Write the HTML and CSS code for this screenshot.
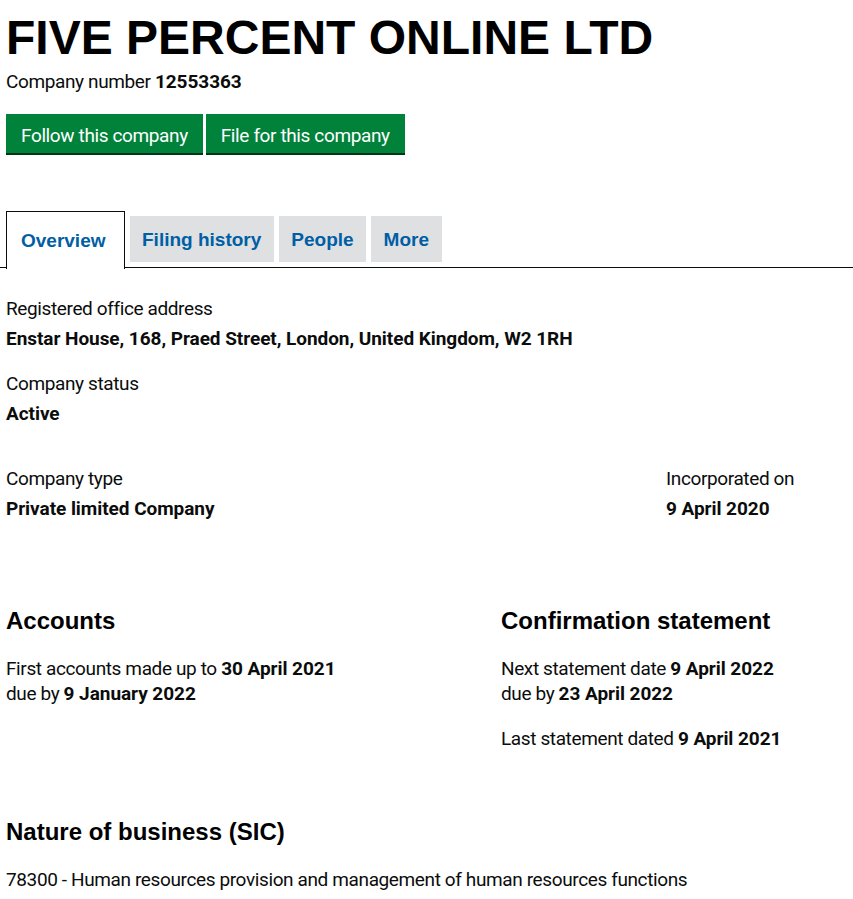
FILE: index.html
```html
<!DOCTYPE html>
<html lang="en">
<head>
    <meta charset="UTF-8">
    <meta name="viewport" content="width=device-width, initial-scale=1.0">
    <title>FIVE PERCENT ONLINE LTD - Overview</title>
    <link rel="stylesheet" href="styles.css">
</head>
<body>
    <main class="page">
        <!-- Company header -->
        <div class="company-header">
            <h1>FIVE PERCENT ONLINE LTD</h1>
            <p class="company-number">Company number <strong>12553363</strong></p>
            <div class="actions">
                <a href="#" class="button">Follow this company</a>
                <a href="#" class="button">File for this company</a>
            </div>
        </div>

        <!-- Tabs -->
        <ul class="tabs">
            <li class="tab active"><a href="#">Overview</a></li>
            <li class="tab"><a href="#">Filing history</a></li>
            <li class="tab"><a href="#">People</a></li>
            <li class="tab"><a href="#">More</a></li>
        </ul>

        <div class="panel">
            <dl class="field">
                <dt>Registered office address</dt>
                <dd>Enstar House, 168, Praed Street, London, United Kingdom, W2 1RH</dd>
            </dl>

            <dl class="field status">
                <dt>Company status</dt>
                <dd>Active</dd>
            </dl>

            <div class="row row-type">
                <dl class="field">
                    <dt>Company type</dt>
                    <dd>Private limited Company</dd>
                </dl>
                <dl class="field">
                    <dt>Incorporated on</dt>
                    <dd>9 April 2020</dd>
                </dl>
            </div>

            <div class="row row-half">
                <div class="block">
                    <h2>Accounts</h2>
                    <p class="first">First accounts made up to <strong>30 April 2021</strong>
                        <br>due by <strong>9 January 2022</strong></p>
                </div>
                <div class="block">
                    <h2>Confirmation statement</h2>
                    <p class="first">Next statement date <strong>9 April 2022</strong>
                        <br>due by <strong>23 April 2022</strong></p>
                    <p class="next">Last statement dated <strong>9 April 2021</strong></p>
                </div>
            </div>

            <div class="block sic">
                <h2>Nature of business (SIC)</h2>
                <p class="sic-line">78300 - Human resources provision and management of human resources functions</p>
            </div>
        </div>
    </main>
</body>
</html>
```

FILE: styles.css
```css
body {
    margin: 0;
    padding: 0;
    background: #ffffff;
    color: #0b0c0c;
    font-family: Roboto, "Liberation Sans", sans-serif;
    font-size: 19px;
    line-height: 25px;
    letter-spacing: -0.38px;
    overflow-x: hidden;
}
.page {
    width: 990px;
    padding: 13px 0 0 6px;
}
h1 {
    font-family: "Liberation Sans", Arial, sans-serif;
    font-weight: 700;
    font-size: 48px;
    line-height: 50px;
    letter-spacing: 0;
    margin: 0;
    color: #000000;
}
h2 {
    font-family: "Liberation Sans", Arial, sans-serif;
    font-weight: 700;
    font-size: 24px;
    line-height: 30px;
    letter-spacing: 0;
    margin: 0;
    color: #000000;
}
p {
    margin: 0;
}
strong {
    font-weight: 700;
    letter-spacing: -0.05px;
}
.company-number {
    margin-top: 6px;
}
.actions {
    display: flex;
    gap: 3px;
    margin-top: 20px;
}
.button {
    display: block;
    background: #00823b;
    color: #ffffff;
    text-decoration: none;
    padding: 9px 15px 5px;
    box-shadow: 0 2px 0 #003618;
}

/* tabs */
.tabs {
    display: flex;
    align-items: flex-start;
    list-style: none;
    margin: 58px 0 0 -6px;
    padding: 0 0 0 6px;
    border-bottom: 1px solid #0b0c0c;
    height: 56px;
}
.tab {
    margin: 5px 5px 0 0;
    background: #dee0e2;
    height: 44px;
    padding: 2px 12.5px 0;
    line-height: 44px;
}
.tab a {
    font-family: "Liberation Sans", Arial, sans-serif;
    font-weight: 700;
    font-size: 19px;
    letter-spacing: 0;
    color: #005ea5;
    text-decoration: none;
}
.tab.active {
    margin-top: 0;
    background: #ffffff;
    border: 1px solid #0b0c0c;
    border-bottom: 0;
    height: 56px;
    padding: 1px 18px 0 14px;
    line-height: 55px;
}

/* overview panel */
.panel {
    padding-top: 28px;
}
.field {
    margin: 0;
}
.field dt {
    margin-bottom: 5px;
}
.field dd {
    margin: 0;
    font-weight: 700;
    letter-spacing: -0.05px;
}
.status {
    margin-top: 20px;
}
.row {
    display: grid;
}
.row-type {
    grid-template-columns: 660px 330px;
    margin-top: 40px;
}
.row-half {
    grid-template-columns: 495px 495px;
    margin-top: 85px;
}
.block .first {
    margin-top: 20px;
}
.block .next {
    margin-top: 20px;
}
.sic {
    margin-top: 66px;
}
.sic .sic-line {
    margin-top: 20px;
}
```
